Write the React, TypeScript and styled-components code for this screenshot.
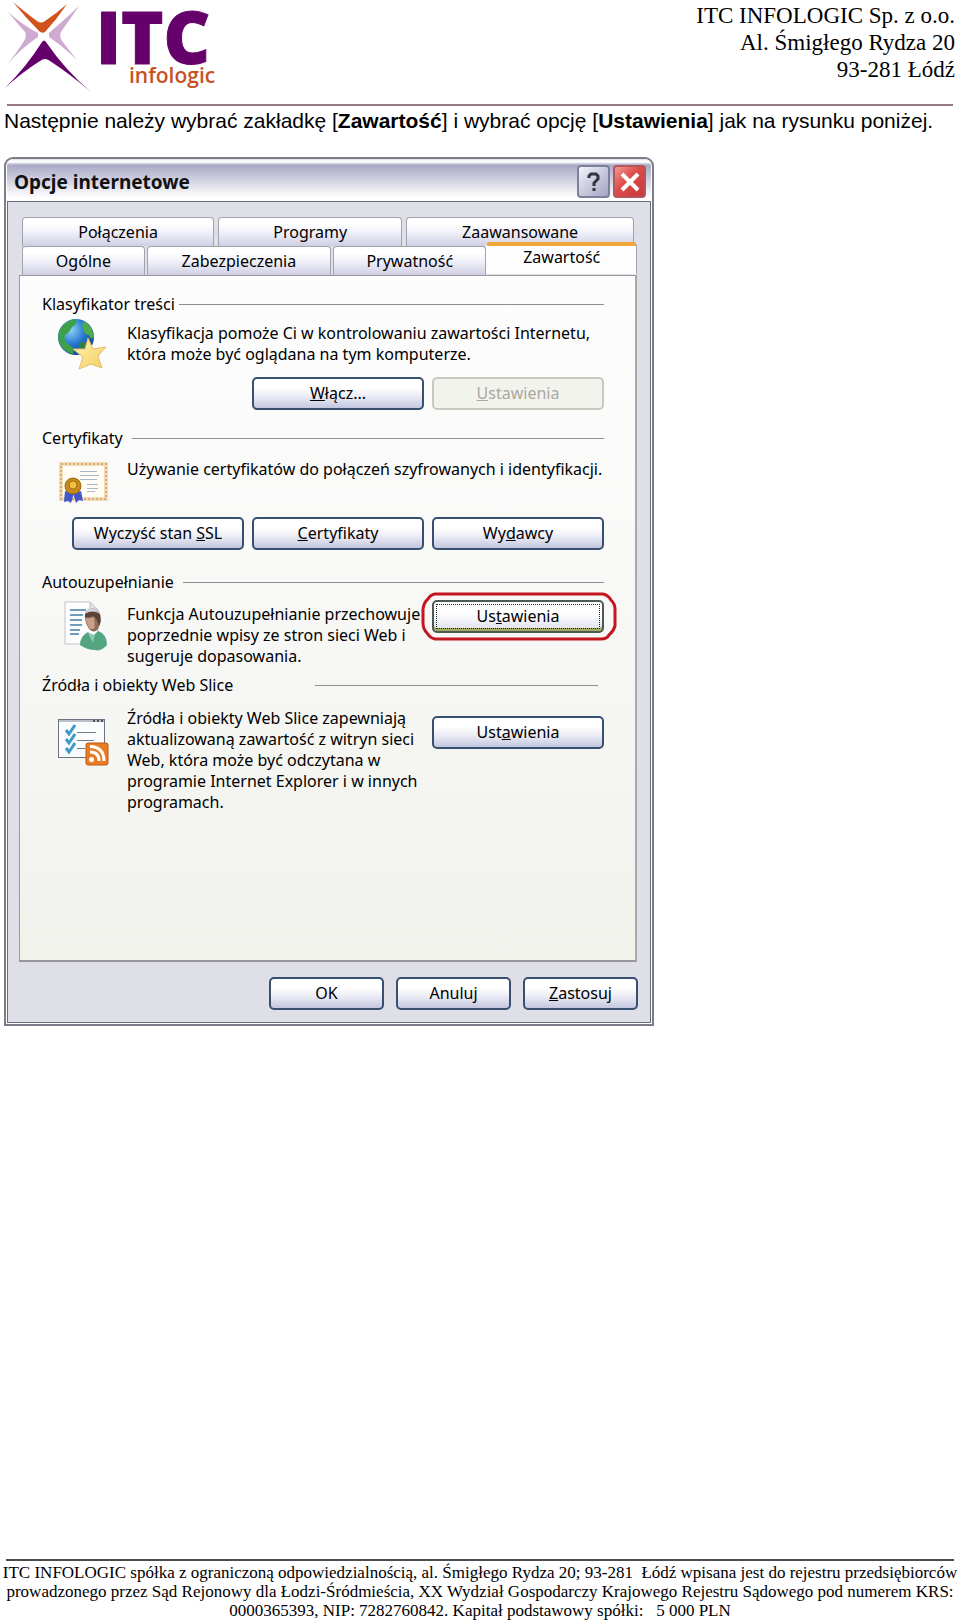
import React from "react";
import styled, { createGlobalStyle, css } from "styled-components";

const ui = `"Noto Sans", "DejaVu Sans", sans-serif`;
const serif = `"Liberation Serif", "Times New Roman", serif`;
const sans = `"Liberation Sans", Arial, sans-serif`;

const GlobalStyle = createGlobalStyle`
  *, *::before, *::after { box-sizing: border-box; }
  body { margin: 0; background: #fff; color: #000; }
  p, h1, h2 { margin: 0; font-weight: 400; }
  button { font: inherit; color: inherit; padding: 0; cursor: pointer; }
`;

const Page = styled.div`
  display: flex;
  flex-direction: column;
  min-height: 100vh;
`;

const Letterhead = styled.header`
  display: flex;
  justify-content: space-between;
  align-items: flex-start;
  margin: 0 7px;
  height: 106px;
  border-bottom: 2px solid #957788;
`;

const Logo = styled.svg`
  display: block;
  width: 220px;
  height: 96px;
  margin-left: -7px;
  overflow: visible;
`;

const Address = styled.address`
  padding-top: 2px;
  font: normal 23px/27px ${serif};
  text-align: right;
  white-space: nowrap;
  margin-right: -2px;
`;

const Main = styled.main`
  flex: 1;
  padding: 2px 4px 24px;
`;

const Intro = styled.p`
  font: 21px/26px ${sans};
`;

const Dialog = styled.section`
  margin-top: 23px;
  width: 100%;
  max-width: 650px;
  padding: 0 1px 1px;
  border: 2px solid #7d7d8a;
  border-radius: 9px 9px 0 0;
  background: #fff;
  font: 16px/21px ${ui};
`;

const TitleBar = styled.header`
  display: flex;
  align-items: center;
  gap: 3px;
  height: 42px;
  padding: 3px 5px 0 7px;
  border-radius: 7px 7px 0 0;
  background: linear-gradient(#dcdce8 0, #fff 2px, #fff 3px, #a9a9c6 6px, #c3c3d7 16px, #e6e6ef 29px, #fff 39px);
`;

const Title = styled.h1`
  flex: 1;
  font-size: 19px;
  line-height: 26px;
  font-weight: 700;
  color: #111;
`;

const CaptionButton = styled.button<{ $close?: boolean }>`
  display: grid;
  place-items: center;
  width: 33px;
  height: 33px;
  border: 2px solid ${(p) => (p.$close ? "#b5555c" : "#7d7f9c")};
  border-radius: 4px;
  background: ${(p) =>
    p.$close
      ? "linear-gradient(135deg, #ef9a92, #dd4a48 45%, #c93a3c)"
      : "linear-gradient(135deg, #f4f4fa, #c9cadd 50%, #a3a5c4)"};
`;

const DialogBody = styled.div`
  padding: 15px 12px 12px 11px;
  border: 1px solid #6c6e80;
  background: #dfdfe8;
`;

const TabRow = styled.div`
  display: flex;
  gap: 4px;
  margin: 0 4px 0 3px;
`;

const FrontTabRow = styled(TabRow)`
  gap: 2px;
  margin: 0 1px 0 3px;
`;

const Tab = styled.button<{ $grow: number; $active?: boolean }>`
  flex: ${(p) => p.$grow} 1 0;
  min-width: 0;
  height: 29px;
  padding-top: 1px;
  border: 1px solid #a3a3b0;
  border-bottom: 0;
  border-radius: 4px 4px 0 0;
  background: linear-gradient(#fff 20%, #f1f1f9 50%, #cfcfe4);
  ${(p) =>
    p.$active &&
    css`
      position: relative;
      height: 32px;
      margin: -4px 0 -1px -2px;
      padding: 0 0 5px;
      border-top: 4px solid #efa93a;
      border-left-color: #fdfdfd;
      background: #fdfdfd;
    `}
`;

const Panel = styled.div`
  margin-right: 1px;
  padding: 18px 31px 147px 22px;
  border: 1px solid #9a9a9e;
  border-right: 2px solid #a9a9ac;
  border-bottom: 2px solid #97979a;
  background: linear-gradient(#fdfdfd, #f9f9f8 40%, #f1f2ec);
`;

const Group = styled.section<{ $top?: number }>`
  margin-top: ${(p) => p.$top ?? 0}px;
`;

const Legend = styled.h2<{ $gap: number; $end?: number }>`
  display: flex;
  align-items: center;
  gap: ${(p) => p.$gap}px;
  font-size: 16px;
  line-height: 21px;
  white-space: nowrap;
  &::after {
    content: "";
    flex: 1;
    margin-right: ${(p) => p.$end ?? 0}px;
    border-top: 1px solid #909090;
  }
`;

const GroupBody = styled.div<{ $top?: number; $action?: boolean }>`
  display: grid;
  grid-template-columns: 52px minmax(0, 1fr) ${(p) => (p.$action ? "172px" : "")};
  align-items: start;
  margin-top: ${(p) => p.$top ?? 10}px;
  padding-left: 15px;
`;

const Icon = styled.svg<{ $height?: number }>`
  display: block;
  width: 52px;
  height: ${(p) => p.$height ?? 44}px;
  overflow: visible;
`;

const Description = styled.p<{ $top?: number }>`
  padding: ${(p) => p.$top ?? 0}px 0 0 18px;
  white-space: nowrap;
`;

const Action = styled.div<{ $top?: number }>`
  position: relative;
  margin-top: ${(p) => p.$top ?? 0}px;
`;

const Highlight = styled.svg`
  position: absolute;
  left: -11px;
  top: -8px;
  width: 196px;
  height: 49px;
  pointer-events: none;
`;

const ButtonRow = styled.div`
  display: flex;
  justify-content: flex-end;
  gap: 8px;
  margin-top: 12px;
`;

const FooterButtons = styled(ButtonRow)`
  gap: 12px;
  margin-top: 15px;
`;

const Button = styled.button<{ $width?: number; $default?: boolean }>`
  display: block;
  width: ${(p) => p.$width ?? 172}px;
  height: 33px;
  border: 2px solid #37506f;
  border-radius: 5px;
  background: linear-gradient(#fff 30%, #ececf6 60%, #c3c7de);
  &:disabled {
    color: #a9a9a0;
    border-color: #c9c9c2;
    background: #f3f3ee;
  }
  ${(p) =>
    p.$default &&
    css`
      border-color: #4b5a52;
      background: linear-gradient(#fff 40%, #dfdff0);
      box-shadow: inset 0 -3px #a3ab62;
      outline: 1px dotted #222;
      outline-offset: -5px;
    `}
`;

const Footer = styled.footer`
  margin: 0 6px;
  border-top: 2px solid #4c4c4c;
  padding-top: 2px;
  display: flex;
  flex-direction: column;
  align-items: center;
  font: 17px/19px ${serif};
  white-space: nowrap;
`;

const ItcLogo = () => (
  <Logo viewBox="0 0 220 96" role="img" aria-label="ITC infologic">
    <path fill="#cfa9d0" d="M8 12 Q24 26 38 33 L38 37 Q20 49 7 65 Q17 52 24 41 Q27 36 25 32 Q18 24 8 12Z" />
    <path fill="#cfa9d0" d="M79 6 Q62 22 49 33 L49 37 Q65 48 77 60 Q69 50 62 41 Q59 36 61 32 Q70 19 79 6Z" />
    <path fill="#d2521c" d="M13 2 Q26 13 37 21 Q41 24 45 21 Q57 13 67 4 Q57 19 45 32 Q42 34 39 31 Q25 17 13 2Z" />
    <path fill="#66006b" d="M5 88 Q27 66 42 42 Q44 39 46 42 Q65 70 91 92 Q70 74 50 61 Q45 57 40 61 Q21 73 5 88Z" />
    <text x="96" y="64" fontFamily={`"Open Sans", sans-serif`} fontWeight="800" fontSize="72" stroke="#66006b" fill="#66006b">ITC</text>
    <text x="129" y="83" fontFamily={`"Open Sans", sans-serif`} fontWeight="600" fontSize="21" fill="#c8521f">infologic</text>
  </Logo>
);

const GlobeIcon = () => (
  <Icon $height={42} viewBox="0 0 52 42" aria-hidden="true">
    <defs>
      <radialGradient id="sea" cx="0.35" cy="0.3" r="0.8">
        <stop offset="0" stopColor="#8fd3f5" />
        <stop offset="0.5" stopColor="#2678cf" />
        <stop offset="1" stopColor="#123a86" />
      </radialGradient>
      <linearGradient id="gold" x1="0" y1="0" x2="1" y2="1">
        <stop offset="0" stopColor="#fff6b0" />
        <stop offset="1" stopColor="#f3cd62" />
      </linearGradient>
    </defs>
    <circle cx="19" cy="14" r="18" fill="url(#sea)" />
    <path fill="#3fa04a" d="M3 6Q9-3 18-4Q22 0 15 4Q13 9 8 12Q6 17 11 21Q18 24 16 31Q6 29 2 19Q0 12 3 6Z" />
    <path fill="#4cab4b" d="M27-2Q36 4 37 14Q34 18 32 12Q27 12 26 6Q24 2 27-2Z" />
    <path fill="#2f7f49" d="M22 20Q28 18 30 22Q27 29 22 30Z" />
    <path fill="url(#gold)" stroke="#e3bd6c" d="M31 15L36 26L49 24L41 33L45 45L34 41L22 46L26 34L16 26L28 26Z" />
  </Icon>
);

const CertificateIcon = () => (
  <Icon $height={46} viewBox="0 0 52 46" aria-hidden="true">
    <rect x="4" y="5" width="45" height="35" fill="#fffdf4" stroke="#f1dcb8" strokeWidth="4" />
    <rect x="4" y="5" width="45" height="35" fill="none" stroke="#dba97a" strokeWidth="2" strokeDasharray="2 2" />
    <path stroke="#a9b8ce" d="M23 12.500H40M23 16.500H42M23 20.500H40M30 25.500H41M30 29.500H41M30 32.500H38" />
    <path fill="#3f57c8" d="M8 32L17 34L14 44L11 42L7 43Z M16 34L24 32L26 42L22 41L19 44Z" />
    <circle cx="16" cy="27" r="8" fill="#c58a17" stroke="#9a6a12" />
    <circle cx="16" cy="26" r="4" fill="#f1bf45" stroke="#a86e10" />
  </Icon>
);

const PersonIcon = () => (
  <Icon viewBox="0 0 52 44" aria-hidden="true">
    <path fill="#fdfdfd" stroke="#c3c3c6" d="M8 2H33L41 10V44H8Z" />
    <path fill="#e2e2e6" stroke="#c3c3c6" d="M33 2V10H41Z" />
    <path stroke="#3f7fa3" strokeWidth="1.500" d="M13 10H29M13 15H26M13 20H25M13 25H25M13 30H23M13 34H22" />
    <path fill="#8e6c5a" d="M28 14Q34 9 42 13Q45 22 41 29Q37 34 32 29Q27 21 28 14Z" />
    <path fill="#c99f86" d="M28 18Q33 19 37 17L38 27Q35 31 32 28Z" />
    <path fill="#5a4438" d="M28 14Q35 9 43 14Q45 21 42 26Q40 18 36 16Q32 18 28 17Z" />
    <path fill="#e4e7ea" stroke="#b4b8bc" d="M28 13Q35 4 43 13Q36 9 28 13Z" />
    <path fill="#53a582" d="M23 45Q23 36 31 32L36 36L41 31Q50 34 50 45Q44 52 38 50Q30 50 23 45Z" />
    <path fill="#8acbac" d="M31 33L36 43L38 35Z" />
  </Icon>
);

const FeedIcon = () => (
  <Icon viewBox="0 0 52 44" aria-hidden="true">
    <rect x="1.500" y="11.500" width="46" height="38" fill="#fbfcfd" stroke="#6b7480" />
    <path stroke="#b9c0c9" strokeWidth="2" d="M2 13H47" />
    <path stroke="#4b525c" strokeWidth="2" strokeDasharray="2 2" d="M36 13H46" />
    <path stroke="#767b82" d="M20 24.500H39M20 32.500H37M20 40.500H28" />
    <path fill="none" stroke="#3b9bc4" strokeWidth="3" d="M9 22L12 26L18 17M9 31L12 35L18 26M9 40L12 44L18 35" />
    <rect x="29" y="35" width="22" height="22" rx="2" fill="#e97b22" stroke="#bd5a14" />
    <circle cx="34.500" cy="51.500" r="2.500" fill="#fff" />
    <path fill="none" stroke="#fff" strokeWidth="3" d="M33 44Q42 44 42 53M33 38.500Q47 39 47 53" />
  </Icon>
);

export default function App() {
  return (
    <>
      <GlobalStyle />
      <Page>
        <Letterhead>
          <ItcLogo />
          <Address>
            ITC INFOLOGIC Sp. z o.o.
            <br />
            Al. Śmigłego Rydza 20
            <br />
            93-281 Łódź
          </Address>
        </Letterhead>

        <Main>
          <Intro>
            Następnie należy wybrać zakładkę [<b>Zawartość</b>] i wybrać opcję [<b>Ustawienia</b>] jak na rysunku poniżej.
          </Intro>

          <Dialog aria-labelledby="dialog-title">
            <TitleBar>
              <Title id="dialog-title">Opcje internetowe</Title>
              <CaptionButton aria-label="Pomoc">
                <svg width="20" height="22" viewBox="0 0 20 22" fill="none" stroke="#33343f" strokeWidth="3" aria-hidden="true">
                  <path d="M5 7V5L7 3H12L14 5V8L10 12V15M10 17V20" />
                </svg>
              </CaptionButton>
              <CaptionButton $close aria-label="Zamknij">
                <svg width="22" height="22" viewBox="0 0 22 22" stroke="#fff" strokeWidth="4" aria-hidden="true">
                  <path d="M3 3L19 19M19 3L3 19" />
                </svg>
              </CaptionButton>
            </TitleBar>

            <DialogBody>
              <div role="tablist">
                <TabRow role="presentation">
                  <Tab role="tab" $grow={192}>Połączenia</Tab>
                  <Tab role="tab" $grow={184}>Programy</Tab>
                  <Tab role="tab" $grow={228}>Zaawansowane</Tab>
                </TabRow>
                <FrontTabRow role="presentation">
                  <Tab role="tab" $grow={122}>Ogólne</Tab>
                  <Tab role="tab" $grow={184}>Zabezpieczenia</Tab>
                  <Tab role="tab" $grow={153}>Prywatność</Tab>
                  <Tab role="tab" aria-selected $grow={150} $active>Zawartość</Tab>
                </FrontTabRow>
              </div>

              <Panel role="tabpanel">
                <Group>
                  <Legend $gap={4}>Klasyfikator treści</Legend>
                  <GroupBody $top={8}>
                    <GlobeIcon />
                    <Description>
                      Klasyfikacja pomoże Ci w kontrolowaniu zawartości Internetu,
                      <br />
                      która może być oglądana na tym komputerze.
                    </Description>
                  </GroupBody>
                  <ButtonRow>
                    <Button><u>W</u>łącz...</Button>
                    <Button disabled><u>U</u>stawienia</Button>
                  </ButtonRow>
                </Group>

                <Group $top={18}>
                  <Legend $gap={9}>Certyfikaty</Legend>
                  <GroupBody>
                    <CertificateIcon />
                    <Description>Używanie certyfikatów do połączeń szyfrowanych i identyfikacji.</Description>
                  </GroupBody>
                  <ButtonRow>
                    <Button>Wyczyść stan <u>S</u>SL</Button>
                    <Button><u>C</u>ertyfikaty</Button>
                    <Button>Wy<u>d</u>awcy</Button>
                  </ButtonRow>
                </Group>

                <Group $top={22}>
                  <Legend $gap={9}>Autouzupełnianie</Legend>
                  <GroupBody $top={7} $action>
                    <PersonIcon />
                    <Description $top={4}>
                      Funkcja Autouzupełnianie przechowuje
                      <br />
                      poprzednie wpisy ze stron sieci Web i
                      <br />
                      sugeruje dopasowania.
                    </Description>
                    <Action>
                      <Button $default>Us<u>t</u>awienia</Button>
                      <Highlight viewBox="0 0 196 49" aria-hidden="true">
                        <path
                          fill="none"
                          stroke="#c4161f"
                          strokeWidth="3"
                          d="M14 2H182Q187 3 190 8Q194 12 194 17V34Q192 40 188 43Q186 47 180 47H14Q9 46 6 41Q2 37 2 31V17Q3 10 7 7Q9 3 14 2Z"
                        />
                      </Highlight>
                    </Action>
                  </GroupBody>
                </Group>

                <Group $top={8}>
                  <Legend $gap={82} $end={6}>Źródła i obiekty Web Slice</Legend>
                  <GroupBody $top={12} $action>
                    <FeedIcon />
                    <Description>
                      Źródła i obiekty Web Slice zapewniają
                      <br />
                      aktualizowaną zawartość z witryn sieci
                      <br />
                      Web, która może być odczytana w
                      <br />
                      programie Internet Explorer i w innych
                      <br />
                      programach.
                    </Description>
                    <Action $top={8}>
                      <Button>Ust<u>a</u>wienia</Button>
                    </Action>
                  </GroupBody>
                </Group>
              </Panel>

              <FooterButtons>
                <Button $width={115}>OK</Button>
                <Button $width={115}>Anuluj</Button>
                <Button $width={115}><u>Z</u>astosuj</Button>
              </FooterButtons>
            </DialogBody>
          </Dialog>
        </Main>

        <Footer>
          <span>
            ITC INFOLOGIC spółka z ograniczoną odpowiedzialnością, al. Śmigłego Rydza 20; 93-281&nbsp; Łódź wpisana jest do rejestru
            przedsiębiorców
          </span>
          <span>
            prowadzonego przez Sąd Rejonowy dla Łodzi-Śródmieścia, XX Wydział Gospodarczy Krajowego Rejestru Sądowego pod numerem KRS:
          </span>
          <span>0000365393, NIP: 7282760842. Kapitał podstawowy spółki: &nbsp; 5 000 PLN</span>
        </Footer>
      </Page>
    </>
  );
}
